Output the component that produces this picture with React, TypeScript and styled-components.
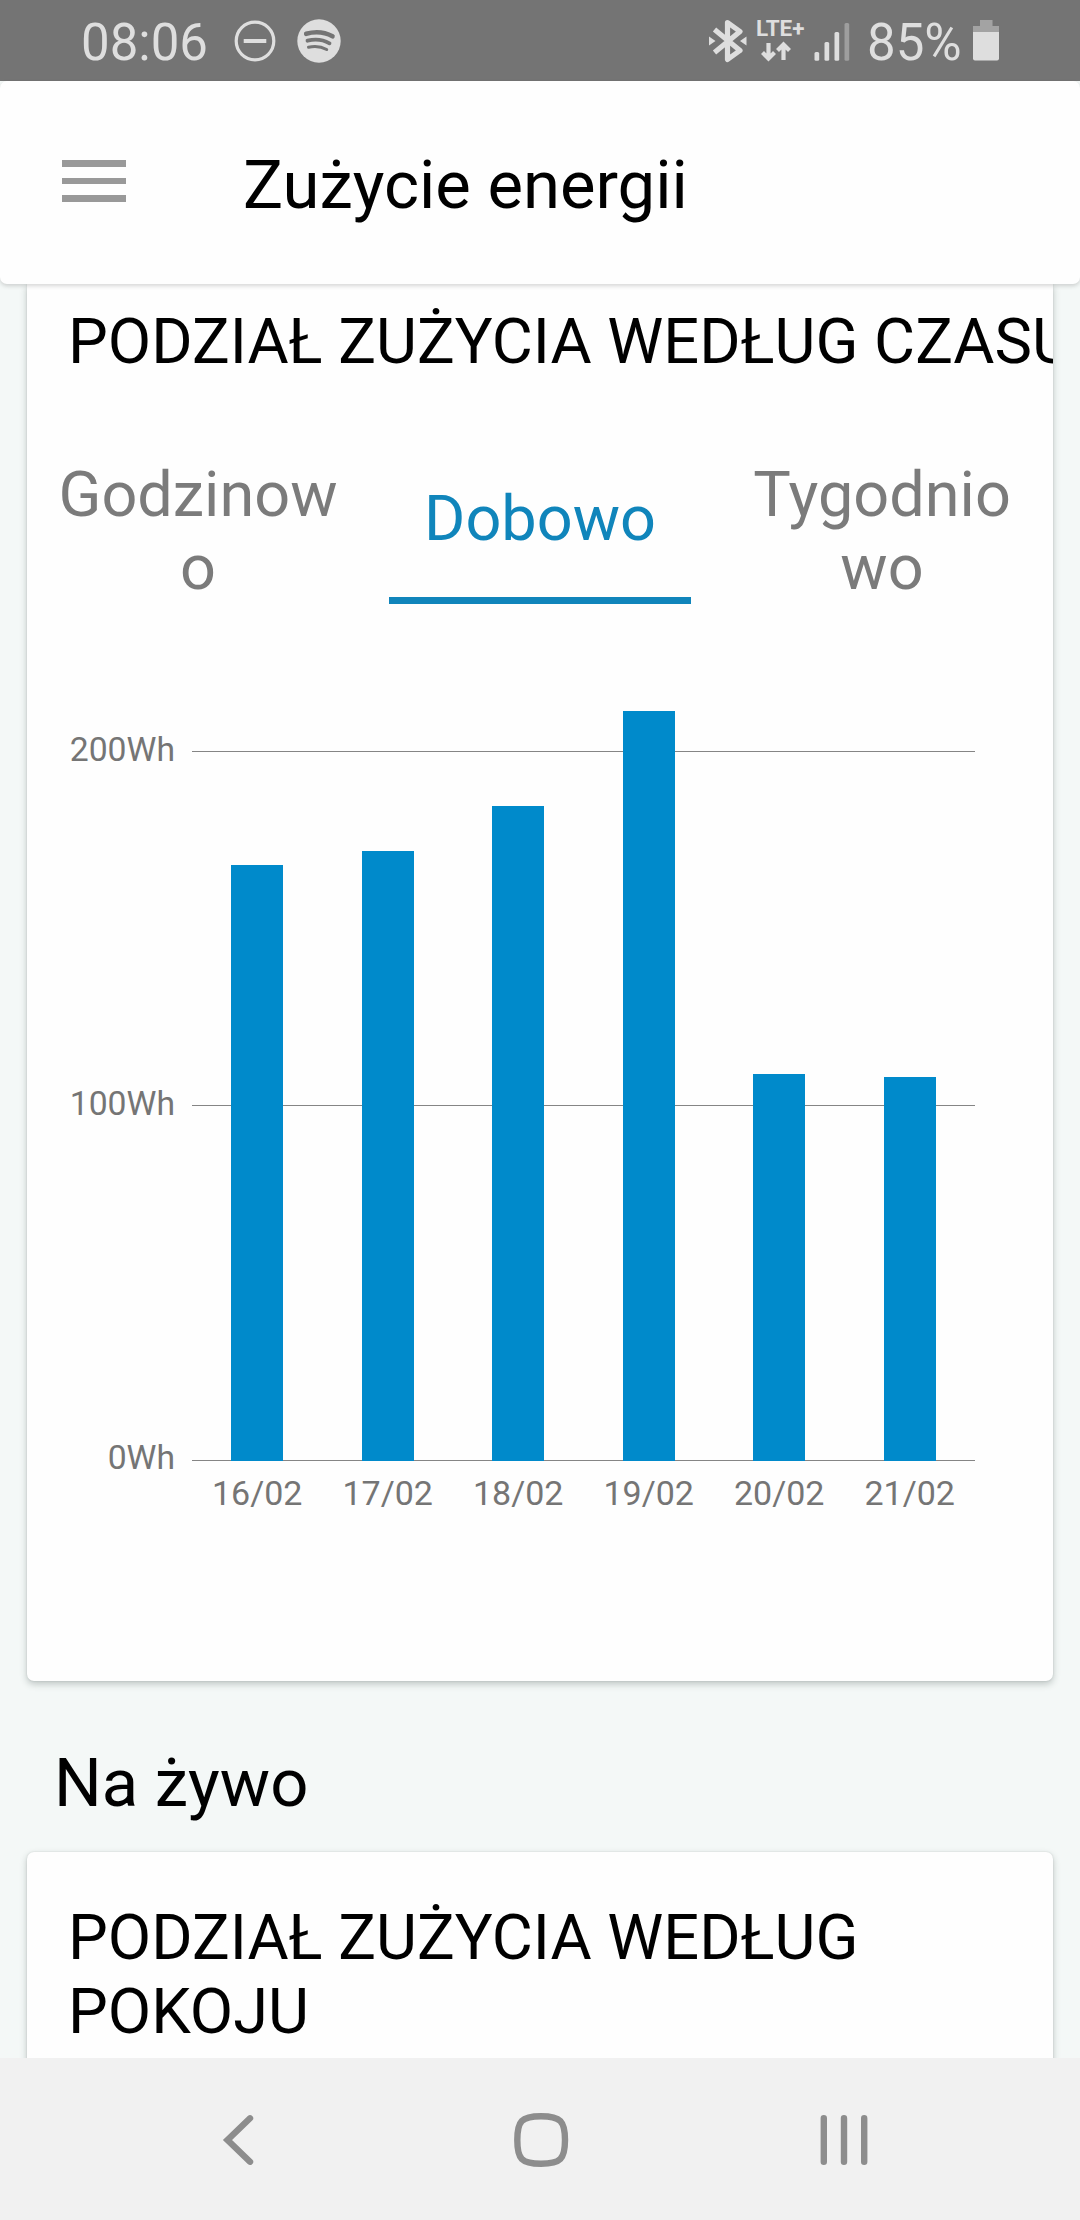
import React from "react";
import styled, { createGlobalStyle } from "styled-components";

const GlobalStyle = createGlobalStyle`
  *, *::before, *::after { box-sizing: border-box; }
  body {
    margin: 0;
    background: #f4f8f7;
    font-family: Roboto, "Noto Sans", sans-serif;
    color: #000;
  }
`;

const Screen = styled.div`
  display: flex;
  flex-direction: column;
  width: 1080px;
  height: 2220px;
  overflow: hidden;
  background: #f4f8f7;
`;

const StatusBar = styled.div`
  flex: none;
  display: flex;
  align-items: center;
  justify-content: space-between;
  height: 81px;
  padding: 0 80px 0 81px;
  background: #747474;
  color: #dedede;
`;

const StatusGroup = styled.div`
  display: flex;
  align-items: center;
`;

const StatusText = styled.span<{ $width: number; $gap?: number }>`
  flex: none;
  width: ${(p) => p.$width}px;
  margin-left: ${(p) => p.$gap ?? 0}px;
  font-size: 51px;
  line-height: 60px;
  padding-top: 4px;
  white-space: nowrap;
`;

const StatusIcon = styled.svg<{ $gap: number }>`
  flex: none;
  display: block;
  margin-left: ${(p) => p.$gap}px;
`;

const Network = styled.div`
  flex: none;
  display: flex;
  flex-direction: column;
  align-items: flex-start;
  gap: 3px;
  width: 50px;
  margin-left: 8px;
`;

const NetworkLabel = styled.span`
  font-size: 22.5px;
  font-weight: 700;
  line-height: 19px;
`;

const NetworkArrows = styled.svg`
  display: block;
  margin-left: 3px;
`;

const Header = styled.header`
  flex: none;
  display: flex;
  align-items: center;
  height: 203px;
  padding-left: 62px;
  background: #fefefe;
  border-radius: 7px;
  box-shadow: 0 2px 4px rgba(0, 0, 0, 0.16);
  z-index: 1;
`;

const MenuButton = styled.button`
  display: flex;
  flex-direction: column;
  gap: 11px;
  width: 64px;
  margin: 0 117px 3px 0;
  padding: 0;
  border: 0;
  background: none;
`;

const MenuLine = styled.span`
  height: 6.6px;
  background: #999;
`;

const HeaderTitle = styled.h1`
  margin: 0;
  padding-top: 5px;
  font-size: 67px;
  font-weight: 400;
  line-height: 80px;
  white-space: nowrap;
`;

const Content = styled.main`
  flex: 1;
  min-height: 0;
  overflow: hidden;
  padding: 0 27px;
`;

const Card = styled.section<{ $continued?: boolean; $height: number }>`
  height: ${(p) => p.$height}px;
  padding-top: ${(p) => (p.$continued ? 21 : 49)}px;
  background: #fefefe;
  border-radius: ${(p) => (p.$continued ? "0 0 7px 7px" : "7px 7px 0 0")};
  box-shadow: 0 3px 7px rgba(30, 50, 45, 0.26), 0 0 2px rgba(30, 50, 45, 0.14);
`;

const CardTitle = styled.h2<{ $clip?: boolean }>`
  margin: 0;
  padding-left: 41px;
  font-size: 63.1px;
  font-weight: 400;
  line-height: 73.5px;
  overflow: hidden;
  white-space: ${(p) => (p.$clip ? "nowrap" : "normal")};
`;

const Tabs = styled.div`
  display: flex;
  align-items: stretch;
  height: 150px;
  margin-top: 75.5px;
`;

const Tab = styled.button<{ $active?: boolean }>`
  flex: 1;
  display: flex;
  align-items: center;
  justify-content: center;
  margin: 0 20px;
  padding: ${(p) => (p.$active ? "0 0 14px" : "4px 0 0")};
  border: 0;
  border-bottom: ${(p) => (p.$active ? "7px solid #1085bb" : "0")};
  background: none;
  color: ${(p) => (p.$active ? "#1085bb" : "#7b7b7b")};
  font-family: inherit;
  font-size: 63px;
  line-height: 73.5px;
  text-align: center;
  word-break: break-all;
`;

const Chart = styled.div`
  display: grid;
  grid-template-columns: 148px 783px;
  column-gap: 17px;
  height: 751px;
  margin-top: 106px;
`;

const Axis = styled.div`
  display: flex;
  flex-direction: column;
  justify-content: space-between;
  align-items: flex-end;
  height: 748px;
  margin-top: 20px;
`;

const AxisLabel = styled.span`
  font-size: 33.7px;
  line-height: 40px;
  color: #757575;
`;

const Plot = styled.div`
  display: flex;
  height: 751px;
  background:
    linear-gradient(#858585, #858585) 0 41px / 100% 1px no-repeat,
    linear-gradient(#858585, #858585) 0 395px / 100% 1px no-repeat,
    linear-gradient(#858585, #858585) 0 750px / 100% 1px no-repeat;
`;

const Column = styled.div`
  flex: 1;
  display: flex;
  flex-direction: column;
  align-items: center;
  justify-content: flex-end;
  height: 807px;
`;

const Bar = styled.div<{ $height: number }>`
  flex: none;
  width: 52.2px;
  height: ${(p) => p.$height}px;
  background: #008acb;
`;

const DayLabel = styled.span`
  flex: none;
  height: 56px;
  padding-top: 12px;
  font-size: 34px;
  line-height: 40px;
  color: #757575;
`;

const SectionTitle = styled.h2`
  margin: 0;
  padding: 62px 0 29px 27px;
  font-size: 67px;
  font-weight: 400;
  line-height: 80px;
`;

const NavBar = styled.nav`
  flex: none;
  display: flex;
  justify-content: center;
  gap: 244px;
  height: 162px;
  padding-top: 52px;
  background: #f1f1f1;
  z-index: 1;
`;

const NavIcon = styled.svg`
  display: block;
  width: 60px;
  height: 60px;
  fill: none;
  stroke: #8d8d8d;
  stroke-width: 6.4;
  stroke-linecap: round;
`;

const days = [
  { label: "16/02", height: 596 },
  { label: "17/02", height: 610 },
  { label: "18/02", height: 655 },
  { label: "19/02", height: 750 },
  { label: "20/02", height: 387 },
  { label: "21/02", height: 384 },
];

export default function App() {
  return (
    <>
      <GlobalStyle />
      <Screen>
        <StatusBar>
          <StatusGroup>
            <StatusText $width={127}>08:06</StatusText>
            <StatusIcon $gap={25} width="44" height="44" viewBox="0 0 44 44">
              <circle cx="22" cy="22" r="18.8" fill="none" stroke="#dedede" strokeWidth="3.2" />
              <path d="M10.7 22h22.6" stroke="#dedede" strokeWidth="4" />
            </StatusIcon>
            <StatusIcon $gap={20} width="44" height="44" viewBox="0 0 44 44">
              <circle cx="22" cy="22" r="21.7" fill="#dedede" />
              <g fill="none" stroke="#747474" strokeLinecap="round">
                <path d="M9.2 14.8c9-2.500 18.500-1.700 26.300 2.500" strokeWidth="4.600" />
                <path d="M10.500 21.700c7.800-2 15.500-1.100 22 2.600" strokeWidth="3.800" />
                <path d="M11.500 28.200c6.400-1.500 12.700-.8 18.200 2.300" strokeWidth="3" />
              </g>
            </StatusIcon>
          </StatusGroup>
          <StatusGroup>
            <StatusIcon $gap={0} width="40" height="44" viewBox="0 0 40 44">
              <path
                d="M6.500 10.500 32 31.500 19.500 40.500V3.500L32 12.500 6.500 33.500"
                fill="none"
                stroke="#dedede"
                strokeWidth="5.200"
                strokeLinejoin="round"
              />
              <path d="M1 17.500 7.500 22 1 26.500zM38.500 17.500 32 22 38.500 26.500z" fill="#dedede" />
            </StatusIcon>
            <Network>
              <NetworkLabel>LTE+</NetworkLabel>
              <NetworkArrows width="36" height="21" viewBox="0 0 36 21">
                <path
                  d="M9.500 2v15M3.500 11.500l6 6 6-6M24.500 19V4M18.500 9.500l6-6 6 6"
                  fill="none"
                  stroke="#dedede"
                  strokeWidth="4.200"
                />
              </NetworkArrows>
            </Network>
            <StatusIcon $gap={8} width="36" height="40" viewBox="0 0 36 40">
              <g fill="#dedede">
                <rect x=".5" y="31" width="4.700" height="8.700" rx="1.500" />
                <rect x="10.500" y="21" width="4.700" height="18.700" rx="1.500" />
                <rect x="20.500" y="11" width="4.700" height="28.700" rx="1.500" />
                <rect x="30.500" y="2" width="4.700" height="37.700" rx="1.500" opacity=".4" />
              </g>
            </StatusIcon>
            <StatusText $gap={17} $width={105}>85%</StatusText>
            <StatusIcon $gap={0} width="28" height="42" viewBox="0 0 28 42">
              <path d="M8 0h12.500v6H27v6H1V6h7z" fill="#a3a3a3" />
              <path d="M1 12h26v26.500q0 2-2 2H3q-2 0-2-2z" fill="#dedede" />
            </StatusIcon>
          </StatusGroup>
        </StatusBar>

        <Header>
          <MenuButton aria-label="Menu">
            <MenuLine />
            <MenuLine />
            <MenuLine />
          </MenuButton>
          <HeaderTitle>Zużycie energii</HeaderTitle>
        </Header>

        <Content>
          <Card $continued $height={1397}>
            <CardTitle $clip>PODZIAŁ ZUŻYCIA WEDŁUG CZASU</CardTitle>
            <Tabs>
              <Tab>Godzinowo</Tab>
              <Tab $active>Dobowo</Tab>
              <Tab>Tygodniowo</Tab>
            </Tabs>
            <Chart>
              <Axis>
                <AxisLabel>200Wh</AxisLabel>
                <AxisLabel>100Wh</AxisLabel>
                <AxisLabel>0Wh</AxisLabel>
              </Axis>
              <Plot>
                {days.map((day) => (
                  <Column key={day.label}>
                    <Bar $height={day.height} />
                    <DayLabel>{day.label}</DayLabel>
                  </Column>
                ))}
              </Plot>
            </Chart>
          </Card>
          <SectionTitle>Na żywo</SectionTitle>
          <Card $height={300}>
            <CardTitle>PODZIAŁ ZUŻYCIA WEDŁUG POKOJU</CardTitle>
          </Card>
        </Content>

        <NavBar>
          <NavIcon viewBox="0 0 60 60">
            <path d="M44 8.300 21.500 30l22.500 21.700" />
          </NavIcon>
          <NavIcon viewBox="0 0 60 60">
            <path d="M31 6.200C50.500 6.200 55 11 55 30S50.500 53.800 31 53.800 7.300 49 7.300 30 11.500 6.200 31 6.200z" />
          </NavIcon>
          <NavIcon viewBox="0 0 60 60">
            <path d="M9.800 8.300v43.400M30 8.300v43.400M50.200 8.300v43.400" />
          </NavIcon>
        </NavBar>
      </Screen>
    </>
  );
}
